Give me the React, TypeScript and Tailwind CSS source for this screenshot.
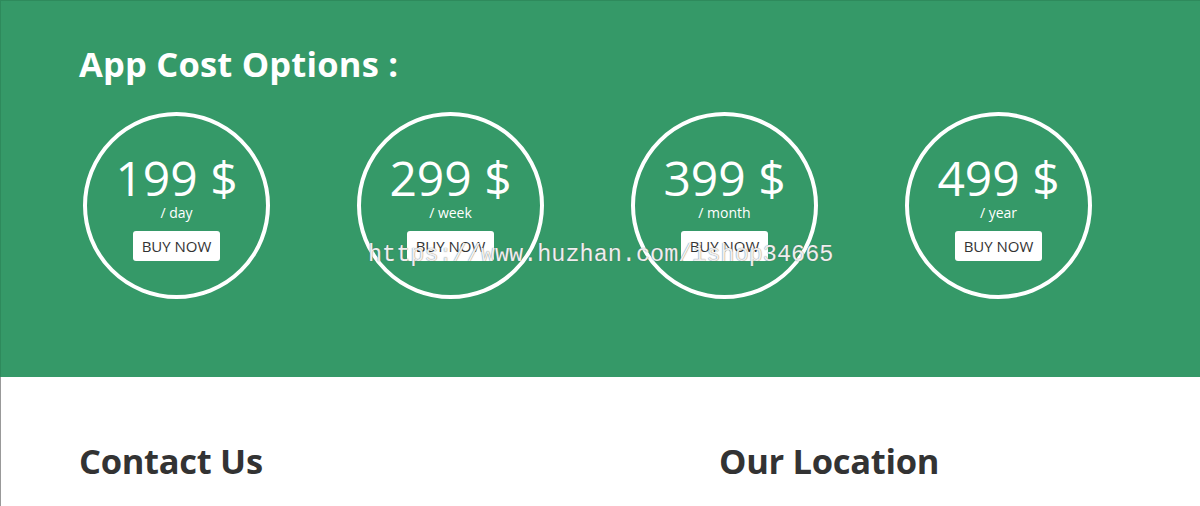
const plans = [
  { price: '199 $', period: '/ day' },
  { price: '299 $', period: '/ week' },
  { price: '399 $', period: '/ month' },
  { price: '499 $', period: '/ year' },
];

function PriceCircle({ price, period }: { price: string; period: string }) {
  return (
    <div className="flex h-[187px] w-[187px] flex-col items-center justify-center rounded-full border-4 border-white text-white">
      <p className="mt-[2px] text-[48px] leading-[52px] font-normal">{price}</p>
      <p className="text-[14px] leading-[18px]">{period}</p>
      <button className="mt-[9px] h-[30px] rounded-[3px] bg-white px-[9px] text-[15px] text-[#333]">BUY NOW</button>
    </div>
  );
}

export default function App() {
  return (
    <div className="relative h-[506px] overflow-hidden bg-white font-['Open_Sans','Noto_Sans',sans-serif]">
      <section className="h-[377px] border-t border-l border-[#2e8a5c] bg-[#359968] pt-[38px] pl-[78px]">
        <h2 className="text-[34.5px] leading-[50px] font-bold tracking-[0.2px] text-white">App Cost Options :</h2>
        <div className="mt-[23px] flex gap-[87px] pl-[4px]">
          {plans.map(p => (
            <PriceCircle key={p.period} price={p.price} period={p.period} />
          ))}
        </div>
      </section>
      <section className="h-[129px] border-l border-[#999] pl-[78px]">
        <div className="flex pt-[62px]">
          <h2 className="w-[640px] text-[34.5px] leading-[44px] font-bold tracking-[-0.3px] text-[#333]">Contact Us</h2>
          <h2 className="text-[34.5px] leading-[44px] font-bold tracking-[-0.3px] text-[#333]">Our Location</h2>
        </div>
      </section>
      <div className="pointer-events-none absolute top-[241px] left-[368px] font-['Liberation_Mono',monospace] text-[23.5px] leading-[28px] text-white/90 [text-shadow:0_0_1px_#555]">
        https://www.huzhan.com/ishop34665
      </div>
    </div>
  );
}
